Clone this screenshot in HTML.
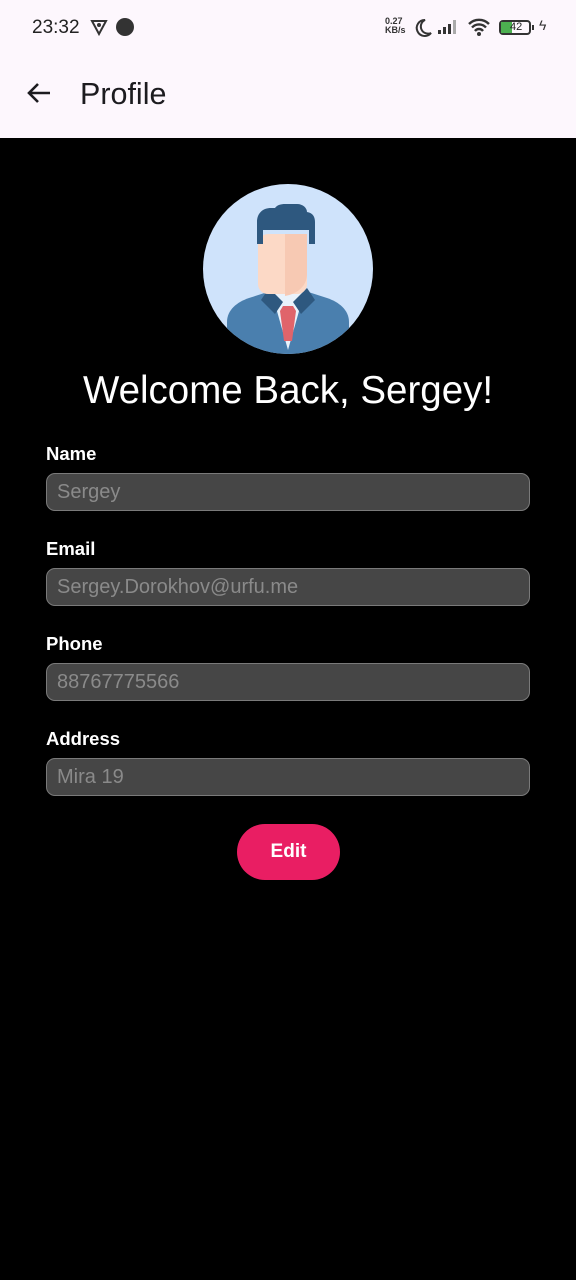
<!DOCTYPE html>
<html><head><meta charset="utf-8"><style>
*{margin:0;padding:0;box-sizing:border-box}
body{width:576px;height:1280px;background:#000;font-family:"Liberation Sans",Roboto,sans-serif;position:relative;overflow:hidden}
.top{position:absolute;left:0;top:0;width:576px;height:138px;background:#fdf7fd}
.time{position:absolute;left:32px;top:17px;font-size:19px;color:#222}
.title{position:absolute;left:80px;top:77px;font-size:30.5px;color:#1c1b1f}
.welcome{position:absolute;left:0;width:576px;top:369px;text-align:center;color:#fff;font-size:38.5px}
.lbl{position:absolute;left:46px;color:#fff;font-size:18.5px;font-weight:bold}
.fld{position:absolute;left:46px;width:484px;height:38px;background:#464646;border:1.5px solid #7a7a7a;border-radius:9px;color:#8a8a8a;font-size:20px;padding-left:10px;line-height:36px}
.btn{position:absolute;left:237px;top:824px;width:103px;height:56px;border-radius:28px;background:#e91e63;color:#fff;font-size:19px;font-weight:bold;text-align:center;line-height:56px}
</style></head><body>
<div class="top">
<div class="time">23:32</div>
<svg style="position:absolute;left:90px;top:18px" width="18" height="18" viewBox="0 0 18 18"><path d="M2 3h14L9 16z" fill="none" stroke="#333" stroke-width="2"/><circle cx="9" cy="7" r="2" fill="#333"/></svg>
<div style="position:absolute;left:116px;top:18px;width:18px;height:18px;border-radius:50%;background:#333"></div>
<div style="position:absolute;left:385px;top:17px;font-size:9px;line-height:9px;color:#333;font-weight:bold">0.27<br>KB/s</div>
<svg style="position:absolute;left:413px;top:18px" width="20" height="20" viewBox="0 0 20 20"><path d="M12 2a8 8 0 1 0 6 13A7 7 0 0 1 12 2z" fill="none" stroke="#333" stroke-width="2"/></svg>
<svg style="position:absolute;left:437px;top:19px" width="24" height="16"><rect x="1" y="11" width="3" height="4" fill="#333"/><rect x="6" y="8" width="3" height="7" fill="#333"/><rect x="11" y="5" width="3" height="10" fill="#333"/><rect x="16" y="1" width="3" height="14" fill="#aaa"/></svg>
<svg style="position:absolute;left:467px;top:17px" width="24" height="20" viewBox="0 0 24 20"><path d="M2 7a14 14 0 0 1 20 0M5 10.5a9.5 9.5 0 0 1 14 0M8 14a5 5 0 0 1 8 0" fill="none" stroke="#333" stroke-width="2.4"/><circle cx="12" cy="17" r="2" fill="#333"/></svg>
<div style="position:absolute;left:499px;top:20px;width:32px;height:15px;border:2px solid #333;border-radius:4px"><div style="width:11px;height:11px;background:#4caf50"></div><span style="position:absolute;left:9px;top:-1px;font-size:11px;color:#222">42</span></div>
<div style="position:absolute;left:532px;top:25px;width:2px;height:5px;background:#333"></div>
<div style="position:absolute;left:539px;top:17px;font-size:14px;color:#333">ϟ</div>
<svg style="position:absolute;left:26px;top:81px" width="26" height="24" viewBox="0 0 26 24"><path d="M24 12H3M12 3l-9 9 9 9" fill="none" stroke="#1c1b1f" stroke-width="2.6"/></svg>
<div class="title">Profile</div>
</div>
<svg style="position:absolute;left:203px;top:184px" width="170" height="170" viewBox="0 0 170 170">
<defs><clipPath id="c"><circle cx="85" cy="85" r="85"/></clipPath></defs>
<circle cx="85" cy="85" r="85" fill="#cfe3fb"/>
<path d="M120 8a85 85 0 0 1 0 154a85 85 0 0 0 0-154z" fill="#bcd6f6"/>
<g clip-path="url(#c)">
<path d="M24 170v-32c0-12 10-20 22-24l28-9h22l28 9c12 4 22 12 22 24v32z" fill="#4a7fae"/>
<path d="M68 106h34l-17 60z" fill="#e9f2fb"/>
<path d="M80 122h10l3 5-4 30h-8l-4-30z" fill="#e0646b"/>
<path d="M66 104l-8 12 14 14 8-12zM104 104l8 12-14 14-8-12z" fill="#2e587f"/>
<rect x="55" y="50" width="49" height="60" rx="10" fill="#fcd9c6"/>
<path d="M82 50h22v40c0 12-10 20-22 22z" fill="#f7c9b3"/>
<path d="M54 60V38c0-9 6-14 14-14h4c2-3 6-4 10-4h12c6 0 10 4 10 8 6 1 8 5 8 10v22h-6V46H60v14z" fill="#2e587f"/>
</g></svg>
<div class="welcome">Welcome Back, Sergey!</div>
<div class="lbl" style="top:443px">Name</div><div class="fld" style="top:473px">Sergey</div>
<div class="lbl" style="top:538px">Email</div><div class="fld" style="top:568px">Sergey.Dorokhov@urfu.me</div>
<div class="lbl" style="top:633px">Phone</div><div class="fld" style="top:663px">88767775566</div>
<div class="lbl" style="top:728px">Address</div><div class="fld" style="top:758px">Mira 19</div>
<div class="btn">Edit</div>
</body></html>
